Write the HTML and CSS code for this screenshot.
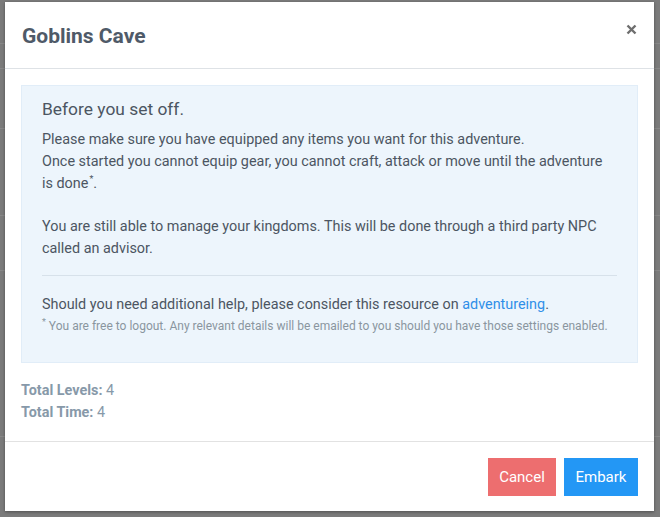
FILE: index.html
```html
<!DOCTYPE html>
<html>
<head>
<meta charset="utf-8">
<link rel="stylesheet" href="styles.css">
</head>
<body>
<div class="backdrop">
  <div class="bg-lines">
    <div class="bg-line l1"></div>
    <div class="bg-line l2"></div>
    <div class="bg-line l3"></div>
    <div class="bg-line l4"></div>
    <div class="bg-line l5"></div>
    <div class="bg-line l6"></div>
  </div>
  <div class="modal">
    <div class="modal-header">
      <h2 class="modal-title">Goblins Cave</h2>
      <button class="close" aria-label="Close">
        <svg width="11" height="11" viewBox="0 0 11 11"><path d="M1.5 1.5 L9.5 9.5 M9.5 1.5 L1.5 9.5" stroke="#6e6e6e" stroke-width="2.4" stroke-linecap="butt"/></svg>
      </button>
    </div>
    <div class="modal-body">
      <div class="info">
        <h4 class="info-title">Before you set off.</h4>
        <p class="info-p wrap">Please make sure you have equipped any items you want for this adventure.<br>Once started you cannot equip gear, you cannot craft, attack or move until the adventure is done<sup class="mark">*</sup>.</p>
        <p class="info-p">You are still able to manage your kingdoms. This will be done through a third party NPC called an advisor.</p>
        <hr class="divider">
        <p class="info-p help">Should you need additional help, please consider this resource on <a href="#" class="link">adventureing</a>.</p>
        <p class="note"><sup>*</sup> You are free to logout. Any relevant details will be emailed to you should you have those settings enabled.</p>
      </div>
      <div class="stats">
        <div class="stat"><strong>Total Levels:</strong> 4</div>
        <div class="stat"><strong>Total Time:</strong> 4</div>
      </div>
    </div>
    <div class="modal-footer">
      <button class="btn btn-cancel">Cancel</button>
      <button class="btn btn-embark">Embark</button>
    </div>
  </div>
</div>
</body>
</html>
```

FILE: styles.css
```css
html, body {
  margin: 0;
  padding: 0;
}
body {
  background: #7b7b7b;
  font-family: Roboto, "Liberation Sans", sans-serif;
  width: 660px;
  height: 517px;
  overflow: hidden;
}
.backdrop {
  position: relative;
  width: 660px;
  height: 517px;
  padding: 2px 0 0 5px;
  box-sizing: border-box;
}
.bg-lines {
  position: absolute;
  inset: 0;
}
.bg-line {
  position: absolute;
  left: 0;
  right: 0;
  height: 1px;
  background: #888;
}
.l1 { top: 43px; }
.l2 { top: 68px; }
.l3 { top: 128px; }
.l4 { top: 215px; }
.l5 { top: 270px; }
.l6 { top: 436px; }
.modal {
  position: relative;
  width: 649px;
  height: 509px;
  background: #fff;
  box-shadow: 0 1px 3px rgba(0,0,0,0.35);
  display: flex;
  flex-direction: column;
}
.modal-header {
  height: 65px;
  flex: none;
  border-bottom: 1px solid #dee2e6;
  display: flex;
  align-items: center;
  justify-content: space-between;
  padding: 1px 17px 0 17px;
  box-sizing: content-box;
}
.modal-title {
  margin: 0;
  font-size: 21px;
  font-weight: 700;
  color: #4f5a68;
}
.close {
  border: 0;
  background: none;
  padding: 0;
  margin-top: -12px;
  display: flex;
}
.modal-body {
  padding: 16px 16px 0 16px;
  flex: 1;
}
.info {
  background: #edf5fc;
  border: 1px solid #e1edf8;
  padding: 11px 20px 26px 20px;
  color: #4c5562;
}
.info-title {
  margin: 0 0 8px 0;
  font-size: 17.4px;
  font-weight: 400;
  line-height: 24px;
  color: #4c5562;
}
.info-p {
  margin: 0 0 21px 0;
  font-size: 14.4px;
  line-height: 22px;
}
.wrap {
  padding-right: 8px;
}
.info-p sup, .note sup {
  font-size: 9px;
  line-height: 0;
}
.mark {
  margin-left: 1px;
}
.divider {
  border: 0;
  border-top: 1px solid #d7e1ea;
  margin: -6px 0 18px 0;
}
.help {
  margin-bottom: 0;
}
.link {
  color: #2f8fe8;
  text-decoration: none;
}
.note {
  margin: 0;
  font-size: 12px;
  line-height: 20px;
  color: #8a959f;
  white-space: nowrap;
}
.stats {
  padding-top: 17px;
}
.stat {
  font-size: 14.4px;
  line-height: 22px;
  color: #8799a9;
}
.stat strong {
  font-weight: 700;
}
.modal-footer {
  border-top: 1px solid #e2e2e2;
  height: 70px;
  flex: none;
  display: flex;
  justify-content: flex-end;
  align-items: flex-start;
  gap: 8px;
  padding: 16px 16px 0 16px;
  box-sizing: border-box;
}
.btn {
  height: 38px;
  border: 0;
  border-radius: 0;
  color: #fff;
  font-family: Roboto, "Liberation Sans", sans-serif;
  font-size: 15px;
  padding: 0 10px;
}
.btn-cancel {
  background: #ed6e6f;
  width: 68px;
}
.btn-embark {
  background: #2397f5;
  width: 74px;
}
```
